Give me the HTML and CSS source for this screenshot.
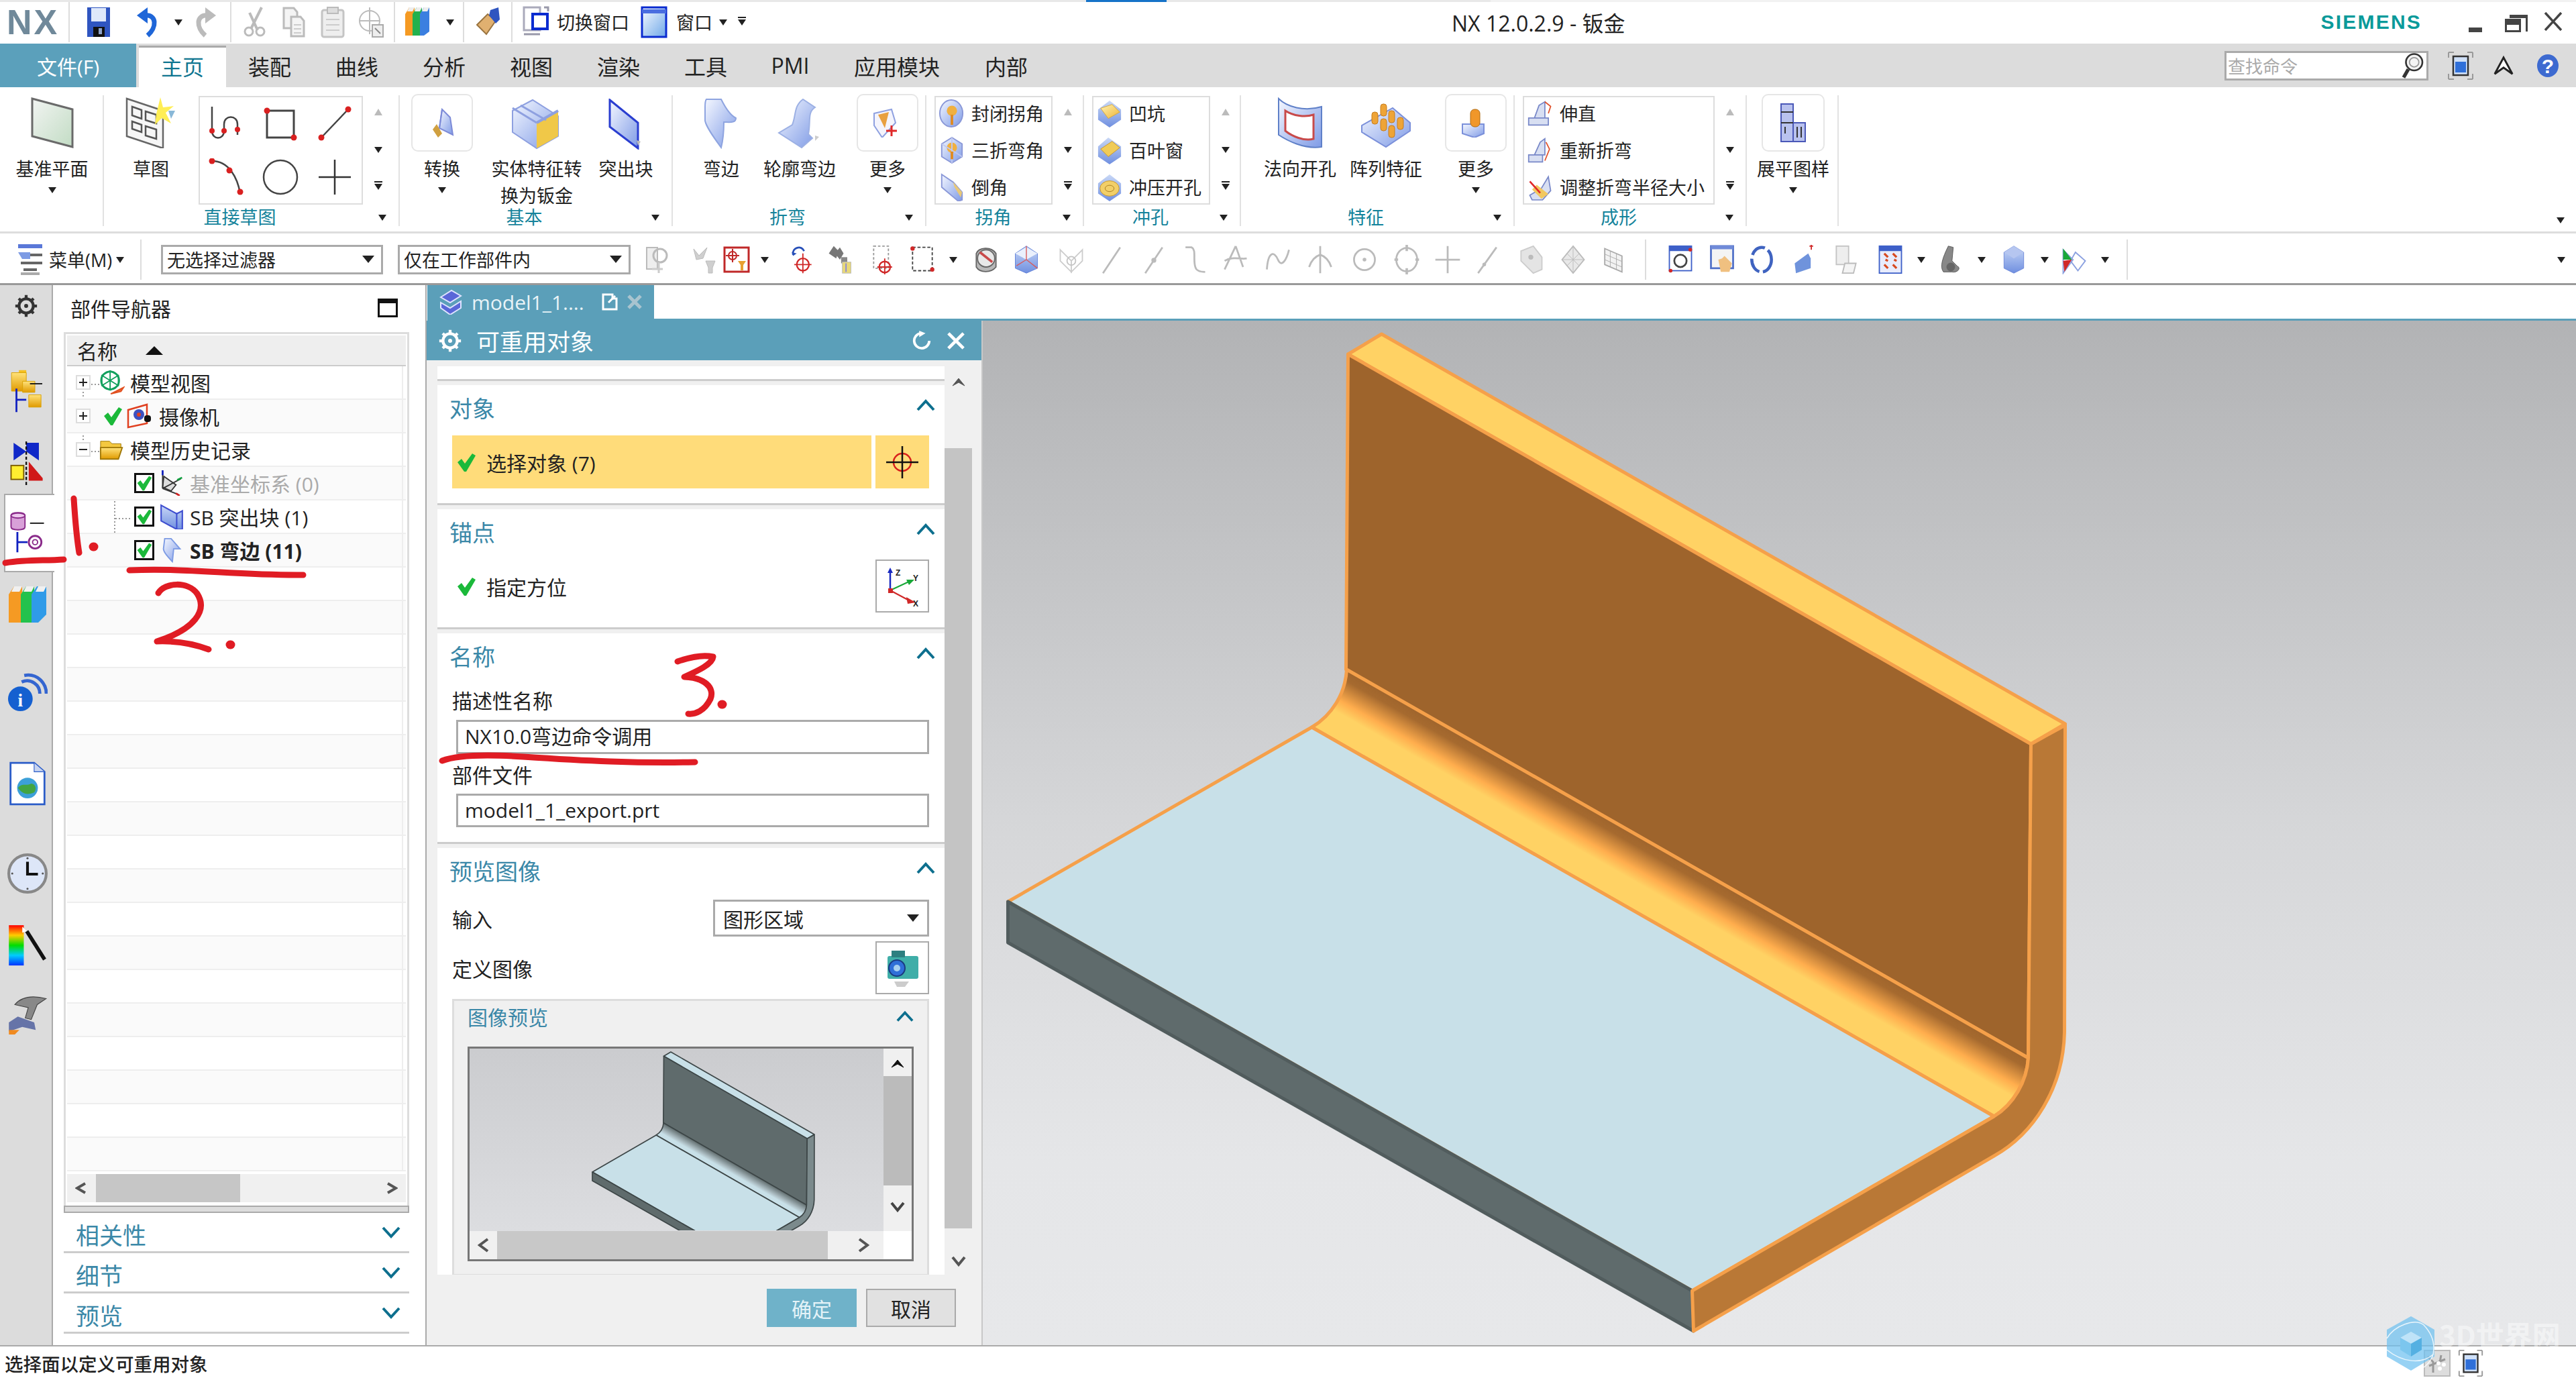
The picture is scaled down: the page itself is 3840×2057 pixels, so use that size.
FILE: index.html
```html
<!DOCTYPE html>
<html lang="zh-CN">
<head>
<meta charset="utf-8">
<title>NX 12.0.2.9 - 钣金</title>
<link rel="stylesheet" href="styles.css">
</head>
<body>
<svg class="sprite" aria-hidden="true">
<defs>
<linearGradient id="gB" x1="0" y1="0" x2="1" y2="1"><stop offset="0" stop-color="#f4f7ff"/><stop offset="1" stop-color="#7f9be6"/></linearGradient>
<linearGradient id="gB2" x1="0" y1="0" x2="0" y2="1"><stop offset="0" stop-color="#c9d8f6"/><stop offset="1" stop-color="#6f8fe0"/></linearGradient>
<linearGradient id="gY" x1="0" y1="0" x2="1" y2="1"><stop offset="0" stop-color="#fff2b0"/><stop offset="1" stop-color="#eeb53a"/></linearGradient>
<linearGradient id="gG" x1="0" y1="0" x2="1" y2="1"><stop offset="0" stop-color="#f2f4f2"/><stop offset="1" stop-color="#c2dcc4"/></linearGradient>
<linearGradient id="gF" x1="0" y1="0" x2="0" y2="1"><stop offset="0" stop-color="#ffe27a"/><stop offset="1" stop-color="#e09a00"/></linearGradient>
<linearGradient id="gR" x1="0" y1="0" x2="0" y2="1"><stop offset="0" stop-color="#f00"/><stop offset=".25" stop-color="#fc0"/><stop offset=".5" stop-color="#0d0"/><stop offset=".75" stop-color="#0cf"/><stop offset="1" stop-color="#03f"/></linearGradient>
<linearGradient id="bendA" gradientUnits="userSpaceOnUse" x1="2008" y1="998" x2="1958.5" y2="1085"><stop offset="0" stop-color="#9e642c"/><stop offset=".15" stop-color="#a66a2f"/><stop offset=".45" stop-color="#ffad4d"/><stop offset=".62" stop-color="#ffd264"/><stop offset="1" stop-color="#ffd264"/></linearGradient>
<linearGradient id="bendB" gradientUnits="userSpaceOnUse" x1="2008" y1="998" x2="1958.5" y2="1085"><stop offset="0" stop-color="#5f6b6c"/><stop offset=".5" stop-color="#aebfc5"/><stop offset=".7" stop-color="#c8e0e8"/><stop offset="1" stop-color="#c8e0e8"/></linearGradient>
<g id="model">
<polygon class="m-top" points="2060,498 3079,1079 3028,1109 2010,528"/>
<polygon class="m-web" points="2010,528 3028,1109 3024,1577 2007,998"/>
<path class="m-bend" d="M2008 998 3024 1577C3022 1612 3002 1646 2973 1664L1956 1084C1986 1066 2006 1034 2008 998Z"/>
<polygon class="m-plate" points="1956,1084 2973,1664 2523,1924 1503,1344"/>
<polygon class="m-front" points="1503,1344 2523,1924 2525,1984 1503,1405"/>
<path class="m-side" d="M3028 1109 3079 1081 3078 1539C3076 1622 3032 1690 2973 1723L2525 1984 2523 1924 2973 1664C3002 1646 3022 1612 3024 1577Z"/>
</g>
<symbol id="save" viewBox="0 0 40 48"><path d="M3 2h34v44H3z" fill="#2f55c0"/><path d="M9 3h22v20H9z" fill="#dfe8fa"/><path d="M12 31h17v15H12z" fill="#111"/><path d="M20 33h5v9h-5z" fill="#8fa3c8"/></symbol>
<symbol id="undo" viewBox="0 0 40 48"><path d="M20 44C34 32 34 12 16 14" fill="none" stroke="#1f66d8" stroke-width="7"/><path d="M4 14 20 2v24z" fill="#1f66d8"/></symbol>
<symbol id="redo" viewBox="0 0 40 48"><path d="M20 44C6 32 6 12 24 14" fill="none" stroke="#bbb" stroke-width="7"/><path d="M36 14 20 2v24z" fill="#bbb"/></symbol>
<symbol id="cut" viewBox="0 0 40 48"><path d="M30 2 14 34M12 10l12 26" fill="none" stroke="#bbb" stroke-width="4"/><circle cx="11" cy="38" r="6" fill="none" stroke="#bbb" stroke-width="3"/><circle cx="28" cy="38" r="6" fill="none" stroke="#bbb" stroke-width="3"/></symbol>
<symbol id="copy" viewBox="0 0 40 48"><path d="M5 3h15l5 6v24H5z" fill="#f4f4f4" stroke="#bbb" stroke-width="3"/><path d="M16 16h14l5 6v23H16z" fill="#f4f4f4" stroke="#bbb" stroke-width="3"/><path d="M20 28h11M20 34h11M20 40h11" stroke="#ccc" stroke-width="2"/></symbol>
<symbol id="paste" viewBox="0 0 40 48"><rect x="4" y="6" width="32" height="40" rx="3" fill="#eee" stroke="#c4c4c4" stroke-width="3"/><rect x="12" y="2" width="16" height="9" fill="#ddd" stroke="#bbb" stroke-width="2"/><path d="M10 20h20M10 28h20M10 36h20" stroke="#ccc" stroke-width="2"/></symbol>
<symbol id="pastes" viewBox="0 0 40 48"><circle cx="18" cy="22" r="15" fill="none" stroke="#bbb" stroke-width="2"/><path d="M18 2v40M2 22h32" stroke="#bbb" stroke-width="2"/><rect x="22" y="28" width="16" height="18" fill="#eee" stroke="#aaa" stroke-width="2"/><path d="m26 33 8 8" stroke="#888" stroke-width="2"/></symbol>
<symbol id="books" viewBox="0 0 40 48"><path d="M2 12 8 2h8v42H2z" fill="#f59a23"/><path d="M13 12l6-10h8v42H13z" fill="#23b14d"/><path d="M24 12l6-10h8v36l-8 6h-6z" fill="#3b7fe0"/><path d="M8 2h8l-3 6H5zM19 2h8l-3 6h-8zM30 2h8l-3 6h-8z" fill="#eee"/></symbol>
<symbol id="hand" viewBox="0 0 40 48"><path d="M4 28 20 12l12 10-14 20z" fill="#e0b070" stroke="#9a7440" stroke-width="2"/><path d="M24 6l12-4 2 18-6 6-10-12z" fill="#2f55c0"/></symbol>
<symbol id="switch" viewBox="0 0 40 48"><rect x="2" y="2" width="24" height="34" fill="#fff" stroke="#aab" stroke-width="3"/><rect x="15" y="12" width="22" height="22" fill="#fff" stroke="#0a2bd0" stroke-width="4"/><path d="M2 42h24M32 2h6v6" stroke="#99a" stroke-width="3" fill="none"/></symbol>
<symbol id="win" viewBox="0 0 40 48"><defs><linearGradient id="gW" x1="0" y1="0" x2="1" y2="1"><stop offset="0" stop-color="#f8fbff"/><stop offset="1" stop-color="#6fa8e8"/></linearGradient></defs><rect x="2" y="2" width="36" height="44" fill="url(#gW)" stroke="#0a2bd0" stroke-width="3"/><path d="M2 8h36" stroke="#4a6ee0" stroke-width="6"/></symbol>
<symbol id="datum" viewBox="0 0 64 76"><path d="M2 2 62 18V74L2 58z" fill="url(#gG)" stroke="#6a6a6a" stroke-width="3"/></symbol>
<symbol id="sketch" viewBox="0 0 76 76"><path d="M2 2 56 20V76L2 58z" fill="#f6f6f6" stroke="#666" stroke-width="2.5"/><path d="M10 14 24 19V32L10 27zM30 21 46 26V39L30 34zM10 36 24 41V52L10 47zM30 43 46 48V62L30 57z" fill="none" stroke="#555" stroke-width="2.5"/><path d="M52 0l4 15 16-2-12 10 8 16-14-8-10 10 2-16z" fill="#ffee55"/><path d="M64 20h10l-6 12z" fill="#89b8d8"/></symbol>
<symbol id="sspline" viewBox="0 0 56 56"><path d="M6 2V38C6 52 24 52 24 38V28C24 14 44 14 44 28V44" fill="none" stroke="#444" stroke-width="2.5"/><circle cx="6" cy="38" r="4" fill="#d92020"/><circle cx="24" cy="38" r="4" fill="#d92020"/><circle cx="44" cy="36" r="4" fill="#d92020"/></symbol>
<symbol id="srect" viewBox="0 0 56 56"><rect x="8" y="8" width="40" height="40" fill="none" stroke="#444" stroke-width="3"/><circle cx="8" cy="8" r="4.5" fill="#d92020"/><circle cx="48" cy="48" r="4.5" fill="#d92020"/></symbol>
<symbol id="sline" viewBox="0 0 56 56"><path d="M8 48 48 6" stroke="#444" stroke-width="2.5"/><circle cx="8" cy="48" r="4.5" fill="#d92020"/><circle cx="48" cy="6" r="4.5" fill="#d92020"/></symbol>
<symbol id="sarc" viewBox="0 0 56 56"><path d="M6 4C32 4 44 30 48 52" fill="none" stroke="#444" stroke-width="2.5"/><circle cx="6" cy="4" r="4.5" fill="#d92020"/><circle cx="32" cy="18" r="4.5" fill="#d92020"/><circle cx="48" cy="50" r="4.5" fill="#d92020"/></symbol>
<symbol id="scircle" viewBox="0 0 56 56"><ellipse cx="28" cy="28" rx="25" ry="25" fill="none" stroke="#444" stroke-width="2.5"/></symbol>
<symbol id="spoint" viewBox="0 0 56 56"><path d="M28 2V54M4 28H52" stroke="#333" stroke-width="2.5"/></symbol>
<symbol id="convert" viewBox="0 0 44 44"><path d="M22 2 34 14 38 40 18 30z" fill="url(#gB)" stroke="#7d8bd8" stroke-width="2"/><path d="M8 32 14 24 22 38 16 44z" fill="#d0a040"/><path d="M22 2 18 30" stroke="#7d8bd8" stroke-width="2"/></symbol>
<symbol id="s2s" viewBox="0 0 76 76"><path d="M2 18 32 2 70 26V56L38 74 2 50z" fill="url(#gB)" stroke="#8ea0e0" stroke-width="2"/><path d="M38 74V36L70 18V56z" fill="#f0c848"/><path d="M38 36 2 14M14 10 52 32" stroke="#8ea0e0" stroke-width="3" fill="none"/><path d="M38 36 70 18" stroke="#8ea0e0" stroke-width="4"/></symbol>
<symbol id="tabb" viewBox="0 0 56 76"><path d="M4 2 46 36V74L4 42z" fill="url(#gB)" stroke="#2a3ed0" stroke-width="3"/><path d="M44 62l6 2-4 6z" fill="#bbb"/></symbol>
<symbol id="flange" viewBox="0 0 56 76"><path d="M6 2H28C34 14 42 26 50 30 50 38 40 36 32 36 32 50 30 66 28 74 18 60 6 44 4 34V14C4 8 4 4 6 2Z" fill="url(#gB)" stroke="#8ea4e0" stroke-width="2"/></symbol>
<symbol id="contour" viewBox="0 0 70 76"><path d="M40 2 58 14C46 22 52 34 48 54L54 60 38 74 4 52 24 40C30 26 26 12 40 2Z" fill="url(#gB)" stroke="#9cb0e4" stroke-width="2"/><path d="M58 56l6 2-6 6z" fill="#ccc"/></symbol>
<symbol id="more1" viewBox="0 0 44 44"><path d="M2 8 28 2 34 22 14 44 2 26z" fill="#f4f4fc" stroke="#8ea0e0" stroke-width="2"/><path d="M8 10 24 6 18 30z" fill="#e8a040"/><path d="M28 26V42M20 34H36" stroke="#e02828" stroke-width="3"/></symbol>
<symbol id="ccorner" viewBox="0 0 40 44"><ellipse cx="19" cy="22" rx="18" ry="21" fill="url(#gB)" stroke="#8a98d8" stroke-width="2"/><circle cx="20" cy="18" r="8" fill="#f0b040"/><path d="M20 24v16" stroke="#e08a20" stroke-width="4"/></symbol>
<symbol id="tribend" viewBox="0 0 40 44"><path d="M20 2 36 12V32L20 42 4 32V12Z" fill="url(#gB)" stroke="#8a98d8" stroke-width="2"/><circle cx="20" cy="18" r="8" fill="#f0b040"/><path d="M20 2V42M4 12 36 32" stroke="#c0c8f0" stroke-width="2"/><path d="M20 24v12" stroke="#e08a20" stroke-width="4"/></symbol>
<symbol id="chamf" viewBox="0 0 40 44"><path d="M4 2 22 14 36 30V42L30 44 4 22z" fill="url(#gB)" stroke="#8a98d8" stroke-width="2"/><path d="M22 14 36 30 34 38 24 22z" fill="#e8c878"/></symbol>
<symbol id="dimple" viewBox="0 0 40 44"><path d="M20 2 38 16V32L20 44 2 32V16Z" fill="url(#gB2)"/><path d="M6 14 24 8 36 20 18 30z" fill="url(#gY)" stroke="#d8a838"/></symbol>
<symbol id="louver" viewBox="0 0 40 44"><path d="M18 2 38 16V32L20 44 2 32V16Z" fill="url(#gB2)"/><path d="M6 20 24 8 36 18 18 32z" fill="#f0cb58" stroke="#c9982a"/></symbol>
<symbol id="drawn" viewBox="0 0 40 44"><path d="M20 2 38 16V32L20 44 2 32V16Z" fill="url(#gB2)"/><ellipse cx="20" cy="24" rx="15" ry="12" fill="#f2cf68" stroke="#c9982a"/><ellipse cx="20" cy="24" rx="7" ry="5" fill="none" stroke="#a87c20"/></symbol>
<symbol id="ncut" viewBox="0 0 68 76"><path d="M2 2C14 14 40 22 66 14V74C40 78 14 64 2 56z" fill="url(#gB)" stroke="#5f80c8" stroke-width="2"/><path d="M12 20C24 28 42 30 54 26V62C40 66 22 58 12 50z" fill="#fff" stroke="#c84a4a" stroke-width="3"/></symbol>
<symbol id="pattern" viewBox="0 0 76 68"><path d="M2 34 48 8 74 30V42L38 66 2 44z" fill="url(#gB)" stroke="#7b90da" stroke-width="2"/><g fill="#eea437" stroke="#c77c1c" stroke-width="1"><rect x="30" y="2" width="9" height="18" rx="4"/><rect x="17" y="14" width="9" height="18" rx="4"/><rect x="42" y="12" width="9" height="18" rx="4"/><rect x="30" y="24" width="9" height="18" rx="4"/><rect x="55" y="22" width="9" height="18" rx="4"/><rect x="42" y="34" width="9" height="18" rx="4"/></g></symbol>
<symbol id="more2" viewBox="0 0 44 44"><path d="M2 24 34 24V38L20 44 2 38z" fill="url(#gB)" stroke="#7b90da" stroke-width="2"/><rect x="14" y="2" width="14" height="26" rx="6" fill="#f0972a" stroke="#b06a10"/></symbol>
<symbol id="unbend" viewBox="0 0 44 44"><path d="M2 30H36V42H2zM20 8 30 2V30H12z" fill="#d8dff2" stroke="#7787c8" stroke-width="2"/><path d="M30 2 40 10 36 22" fill="none" stroke="#e0502a" stroke-width="2"/></symbol>
<symbol id="rebend" viewBox="0 0 44 44"><path d="M2 30H26V42H2zM22 8 30 2V30H12z" fill="#d8dff2" stroke="#7787c8" stroke-width="2"/><path d="M32 8 38 20 30 40" fill="none" stroke="#e0502a" stroke-width="2"/></symbol>
<symbol id="resize" viewBox="0 0 44 44"><path d="M4 36 24 24 36 4 40 28 26 44H8z" fill="#d8dff2" stroke="#7787c8" stroke-width="2"/><path d="M16 18 36 34 24 42 8 26z" fill="#f2c860"/><path d="M4 12 22 32" stroke="#e02828" stroke-width="3"/></symbol>
<symbol id="flat" viewBox="0 0 40 60"><path d="M2 2H20V58H2zM20 30H38V58H20z" fill="#b9c2ee" stroke="#4a58b8" stroke-width="2"/><path d="M2 14H20M2 30H20M8 36v10M26 36v16M32 36v16" stroke="#333" stroke-width="2"/></symbol>
<symbol id="menuic" viewBox="0 0 40 50"><path d="M2 2H38V8H2z" fill="#5a78d8"/><path d="M10 18H38M6 30H38M10 40H30" stroke="#666" stroke-width="4"/><path d="M2 14H20V24H8z" fill="#7d9be4"/><path d="M6 44H34V48H6z" fill="#aaa"/></symbol>
<symbol id="f1" viewBox="0 0 40 40"><rect x="4" y="2" width="16" height="32" fill="#eee" stroke="#bbb" stroke-width="2"/><circle cx="24" cy="14" r="10" fill="none" stroke="#bbb" stroke-width="3"/><path d="M22 24v16M12 34h16" stroke="#ccc" stroke-width="3"/></symbol>
<symbol id="f2" viewBox="0 0 40 40"><path d="M4 4 12 14 24 2 18 18 8 20zM22 22h14l-4 10v8h-6v-8z" fill="#cfcfcf" stroke="#bbb"/></symbol>
<symbol id="f3" viewBox="0 0 40 40"><rect x="2" y="2" width="36" height="36" fill="#fff" stroke="#c02828" stroke-width="3"/><circle cx="14" cy="14" r="6" fill="none" stroke="#c02828" stroke-width="2"/><path d="M14 4v20M4 14h20" stroke="#c02828" stroke-width="2"/><path d="M22 22h12l-4 6v8h-4v-8z" fill="#e8a030"/></symbol>
<symbol id="f4" viewBox="0 0 40 48"><path d="M6 16C4 4 20 0 24 10" fill="none" stroke="#274fb8" stroke-width="3"/><circle cx="22" cy="32" r="10" fill="none" stroke="#d02828" stroke-width="2.5"/><path d="M22 14V46M8 32H36" stroke="#d02828" stroke-width="2"/><path d="M6 18l-2-6 8 2z" fill="#274fb8"/></symbol>
<symbol id="f5" viewBox="0 0 40 48"><path d="M2 14 10 2 18 10l-4 12zM12 14l8-10 6 10-6 10z" fill="#777"/><rect x="22" y="20" width="10" height="10" fill="#888"/><rect x="24" y="28" width="14" height="18" fill="#e8d878" stroke="#bbb"/><path d="M30 30v14" stroke="#8888d8" stroke-width="2"/></symbol>
<symbol id="f6" viewBox="0 0 40 48"><rect x="4" y="2" width="24" height="36" fill="none" stroke="#999" stroke-width="2" stroke-dasharray="4 3"/><circle cx="22" cy="36" r="9" fill="none" stroke="#d02828" stroke-width="2.5"/><path d="M22 22V48M10 36H34" stroke="#d02828" stroke-width="2"/></symbol>
<symbol id="f7" viewBox="0 0 40 48"><rect x="4" y="4" width="32" height="38" fill="none" stroke="#444" stroke-width="2" stroke-dasharray="5 3"/><circle cx="4" cy="6" r="3.5" fill="#d02828"/><circle cx="36" cy="40" r="3.5" fill="#d02828"/></symbol>
<symbol id="f8" viewBox="0 0 40 48"><path d="M4 14C8 4 28 2 36 14V36C28 46 10 46 4 36z" fill="#b8b8b8" stroke="#666" stroke-width="2"/><ellipse cx="20" cy="22" rx="14" ry="14" fill="#e8e8e8" stroke="#666" stroke-width="2"/><path d="M10 12 30 28" stroke="#c84a4a" stroke-width="4"/></symbol>
<symbol id="f9" viewBox="0 0 40 48"><path d="M20 2 38 14V38L20 46 2 38V14Z" fill="url(#gB2)" stroke="#5f80d8" stroke-width="1"/><path d="M2 14 20 24 38 14 20 4z" fill="#eaf0fc"/><path d="M20 2V24L38 38M20 24 4 34" stroke="#d85a5a" stroke-width="1.5" fill="none"/></symbol>
<symbol id="f10" viewBox="0 0 40 48"><path d="M2 8 20 26V44L2 26zM38 8 20 26V44L38 26z" fill="none" stroke="#ccc" stroke-width="2"/><circle cx="20" cy="26" r="7" fill="none" stroke="#c4c4c4" stroke-width="2"/></symbol>
<symbol id="f11" viewBox="0 0 40 48"><path d="M6 46 34 4" stroke="#bbb" stroke-width="3"/></symbol>
<symbol id="f12" viewBox="0 0 40 48"><path d="M6 46 34 4" stroke="#bbb" stroke-width="3"/><circle cx="20" cy="25" r="4" fill="#bbb"/></symbol>
<symbol id="f13" viewBox="0 0 40 48"><path d="M6 4H16C24 8 18 24 22 36 24 44 34 44 38 44" fill="none" stroke="#bbb" stroke-width="3"/></symbol>
<symbol id="f14" viewBox="0 0 40 48"><path d="M20 2 2 40M20 2 32 36M2 26C14 18 28 24 38 22" fill="none" stroke="#bbb" stroke-width="3"/></symbol>
<symbol id="f15" viewBox="0 0 40 48"><path d="M2 40C4 10 14 10 20 24 26 38 34 24 38 8" fill="none" stroke="#bbb" stroke-width="3"/></symbol>
<symbol id="f16" viewBox="0 0 40 48"><path d="M20 2V46M2 36C6 24 14 18 20 16 26 18 34 24 38 36" fill="none" stroke="#bbb" stroke-width="3"/></symbol>
<symbol id="f17" viewBox="0 0 40 48"><circle cx="20" cy="24" r="17" fill="none" stroke="#bbb" stroke-width="3"/><circle cx="20" cy="24" r="3" fill="#bbb"/></symbol>
<symbol id="f18" viewBox="0 0 40 48"><ellipse cx="20" cy="24" rx="17" ry="19" fill="none" stroke="#bbb" stroke-width="3"/><path d="M20 0V10M20 38V48M0 24H6M34 24H40" stroke="#bbb" stroke-width="4"/></symbol>
<symbol id="f19" viewBox="0 0 40 48"><path d="M20 2V46M0 24H40" stroke="#bbb" stroke-width="3"/></symbol>
<symbol id="f20" viewBox="0 0 40 48"><path d="M4 46 34 4" stroke="#bbb" stroke-width="3"/><circle cx="14" cy="32" r="3" fill="#bbb"/></symbol>
<symbol id="f21" viewBox="0 0 40 48"><path d="M4 10 24 2 38 20V40L24 46 4 26z" fill="#e4e4e4" stroke="#ccc" stroke-width="2"/><circle cx="20" cy="20" r="4" fill="#bbb"/></symbol>
<symbol id="f22" viewBox="0 0 40 48"><path d="M20 2 38 24 20 46 2 24z" fill="#e8e8e8" stroke="#bbb" stroke-width="2"/><path d="M10 14 30 34M30 14 10 34M20 2V46M2 24H38" stroke="#bbb"/></symbol>
<symbol id="f23" viewBox="0 0 40 48"><path d="M6 6 34 18V44L6 32z" fill="#f2f2f2" stroke="#aaa" stroke-width="2"/><path d="M15 10V36M25 14V40M6 15 34 27M6 24 34 36" stroke="#aaa"/></symbol>
<symbol id="f24" viewBox="0 0 40 48"><rect x="2" y="2" width="36" height="40" fill="#fff" stroke="#3d5fc8" stroke-width="2"/><path d="M2 6H38" stroke="#3d5fc8" stroke-width="8"/><circle cx="20" cy="26" r="10" fill="none" stroke="#444" stroke-width="3"/><circle cx="4" cy="42" r="3" fill="#d02828"/><circle cx="36" cy="8" r="3" fill="#d02828"/></symbol>
<symbol id="f25" viewBox="0 0 40 48"><rect x="2" y="2" width="36" height="36" fill="#f4f4f4" stroke="#5070c8" stroke-width="3"/><path d="M2 4H38" stroke="#6f8ad8" stroke-width="6"/><path d="M18 44 14 24 20 22 24 18 36 30 32 44z" fill="#f0c080"/></symbol>
<symbol id="f26" viewBox="0 0 40 48"><ellipse cx="20" cy="24" rx="16" ry="20" fill="none" stroke="#3f63c0" stroke-width="5" stroke-dasharray="26 6"/></symbol>
<symbol id="f27" viewBox="0 0 40 48"><path d="M4 30 26 14 30 22V38L6 46z" fill="#6f93dc"/><path d="M28 2h6M31 0v8" stroke="#d02828" stroke-width="2"/></symbol>
<symbol id="f28" viewBox="0 0 40 48"><rect x="4" y="2" width="20" height="30" fill="#eee" stroke="#c4c4c4" stroke-width="2"/><path d="M18 30H36L32 46H14z" fill="#f4f4f4" stroke="#bbb" stroke-width="2"/></symbol>
<symbol id="f29" viewBox="0 0 40 48"><rect x="2" y="2" width="36" height="44" fill="#e8ecfc" stroke="#3d5fc8" stroke-width="2"/><path d="M2 6H38" stroke="#3d5fc8" stroke-width="8"/><path d="M10 14l6 6M24 14l6 6M10 32l6 6M24 32l6 6M12 24l4 2M26 24l4 2" stroke="#d84a20" stroke-width="3.5"/></symbol>
<symbol id="f30" viewBox="0 0 40 48"><path d="M16 2 24 4 22 26 30 34C38 38 30 46 22 44L8 44C2 36 6 22 16 2Z" fill="#888" stroke="#555"/><circle cx="20" cy="36" r="7" fill="#666"/></symbol>
<symbol id="f31" viewBox="0 0 40 48"><path d="M20 2 36 12V38L20 46 4 38V12Z" fill="url(#gB2)" stroke="#6a86d8"/><path d="M4 12 20 22 36 12 20 2z" fill="#b6c6f0"/></symbol>
<symbol id="f32" viewBox="0 0 40 48"><path d="M2 8 18 24 2 46zM22 12 38 26 26 42 14 26z" fill="none" stroke="#8aa0e0" stroke-width="2"/><path d="M2 6 16 24 2 24z" fill="#18a838"/><path d="M2 26 16 24 4 44z" fill="#d02828"/></symbol>
<symbol id="gear" viewBox="0 0 40 40"><circle cx="20" cy="20" r="12.5" fill="none" stroke="currentColor" stroke-width="5"/><circle cx="20" cy="20" r="3.5" fill="currentColor"/><path d="M20 1V7M20 33V39M1 20H7M33 20H39M7 7l4 4M29 29l4 4M33 7l-4 4M7 33l4-4" stroke="currentColor" stroke-width="5"/></symbol>
<symbol id="nav1" viewBox="0 0 56 72"><path d="M14 2h12v10h-12zM2 12h12v12H2z" fill="#f4c020"/><path d="M2 6h24v18h-2v12H2z" fill="url(#gF)" stroke="#d8a000"/><path d="M20 20h20v18H20z" fill="url(#gF)" stroke="#d8a000"/><path d="M32 28h20" stroke="#111" stroke-width="2" transform="translate(0 -4)"/><path d="M10 32V70M10 50H26" stroke="#1020c0" stroke-width="3"/><path d="M30 42h20v20H30z" fill="url(#gF)" stroke="#d8a000"/></symbol>
<symbol id="nav2" viewBox="0 0 56 70"><path d="M6 2 26 16V2L46 2V30L26 16 6 30z" fill="#1028c8"/><path d="M26 0V70" stroke="#111" stroke-width="2.5" stroke-dasharray="5 3"/><rect x="2" y="38" width="20" height="22" fill="#ffee30" stroke="#7a5a00" stroke-width="2"/><path d="M30 32 52 58V62H30z" fill="#d01818"/></symbol>
<symbol id="nav3" viewBox="0 0 56 70"><path d="M2 8C2 2 24 2 24 8V26C24 32 2 32 2 26z" fill="#d8a0d8" stroke="#8a2a8a" stroke-width="2"/><ellipse cx="13" cy="8" rx="11" ry="4" fill="#eec8ee" stroke="#8a2a8a" stroke-width="2"/><path d="M32 20H54" stroke="#111" stroke-width="2"/><path d="M12 34V66M12 50H28" stroke="#1020c0" stroke-width="3"/><circle cx="40" cy="50" r="10" fill="none" stroke="#8a2a8a" stroke-width="3"/><circle cx="40" cy="50" r="4" fill="none" stroke="#8a2a8a" stroke-width="2"/></symbol>
<symbol id="nav4" viewBox="0 0 60 56"><path d="M2 14 10 2H22V56H2z" fill="#f59a23"/><path d="M20 14l8-12h12V56H20z" fill="#23c24d"/><path d="M36 14 44 2H58V44L46 56H36z" fill="#2f9be8"/><path d="M10 2h12l-4 8H6zM28 2h12l-4 8H24zM46 2h12l-4 8H42z" fill="#f0f0f0"/></symbol>
<symbol id="nav5" viewBox="0 0 62 60"><ellipse cx="20" cy="40" rx="19" ry="19" fill="#1560d0"/><text class="info" x="20" y="52" text-anchor="middle">i</text><path d="M22 14C36 8 50 18 50 32M26 4C46 0 60 16 60 32" fill="none" stroke="#3465d0" stroke-width="5"/></symbol>
<symbol id="nav6" viewBox="0 0 50 60"><path d="M2 2H34L48 14V58H2z" fill="#fff" stroke="#2a5cc8" stroke-width="2.5"/><ellipse cx="25" cy="36" rx="14" ry="14" fill="#3ca0d8"/><path d="M12 36C18 28 22 34 30 30 36 30 38 38 34 42 24 46 18 44 12 36Z" fill="#42a542"/><path d="M34 2V14H48" fill="#c8d4f0" stroke="#2a5cc8"/></symbol>
<symbol id="nav7" viewBox="0 0 58 58"><circle cx="29" cy="29" r="27" fill="#dde6f8" stroke="#888" stroke-width="4"/><path d="M29 12V30H44" fill="none" stroke="#111" stroke-width="4"/><g fill="#555"><circle cx="29" cy="7" r="1.5"/><circle cx="29" cy="51" r="1.5"/><circle cx="7" cy="29" r="1.5"/><circle cx="51" cy="29" r="1.5"/></g></symbol>
<symbol id="nav8" viewBox="0 0 54 56"><rect x="2" y="2" width="20" height="54" fill="url(#gR)"/><path d="M26 10 50 48" stroke="#111" stroke-width="5"/><path d="M20 4l6 6-6 2z" fill="#fff"/></symbol>
<symbol id="nav9" viewBox="0 0 54 56"><path d="M10 14C20 2 36 2 52 6L40 14 32 34 24 32 28 18Z" fill="#888" stroke="#444"/><path d="M2 38 14 30 36 38 38 48 20 44 2 50z" fill="#6674a8"/><path d="M2 48h14l-6 6H2z" fill="#f08a20"/></symbol>
<symbol id="plus" viewBox="0 0 22 22"><rect x="1" y="1" width="20" height="20" fill="#fff" stroke="#ddd" stroke-width="2"/><path d="M5 11h12M11 5v12" stroke="#222" stroke-width="2"/></symbol>
<symbol id="minus" viewBox="0 0 22 22"><rect x="1" y="1" width="20" height="20" fill="#fff" stroke="#ddd" stroke-width="2"/><path d="M5 11h12" stroke="#222" stroke-width="2"/></symbol>
<symbol id="tview" viewBox="0 0 40 40"><circle cx="17" cy="17" r="14" fill="none" stroke="#12a05e" stroke-width="3"/><path d="M4 9 17 2 30 9V25L17 32 4 25ZM17 2V32M4 9 30 25M30 9 4 25" fill="none" stroke="#12a05e" stroke-width="2"/><path d="M18 38 38 28 34 34z" fill="#f06a3a" stroke="#e05020" stroke-width="2"/></symbol>
<symbol id="tcheck" viewBox="0 0 30 30"><path d="M2 15 8 10 13 17 24 2 29 5 15 29 12 29z" fill="#1bb93a"/></symbol>
<symbol id="tcam" viewBox="0 0 38 38"><path d="M2 10 30 2V30L2 36z" fill="none" stroke="#e04020" stroke-width="2.5"/><circle cx="18" cy="17" r="8" fill="#3d50c0"/><circle cx="18" cy="17" r="3" fill="#e04020"/><rect x="26" y="18" width="10" height="10" rx="4" fill="#111"/></symbol>
<symbol id="tfolder" viewBox="0 0 40 34"><path d="M2 4H16L20 8H34V14H2z" fill="#f4c840" stroke="#a07808"/><path d="M2 32V14H36L30 32z" fill="url(#gF)" stroke="#a07808" stroke-width="2"/></symbol>
<symbol id="tcsys" viewBox="0 0 38 42"><path d="M6 10 26 24 18 34 4 28z" fill="#ddd" stroke="#333" stroke-width="2"/><path d="M4 2V30M4 30 34 14M4 30 30 40" stroke="#333" stroke-width="2"/><path d="M4 0V8" stroke="#1020c0" stroke-width="3"/><path d="M28 16 36 12" stroke="#12a040" stroke-width="3"/><path d="M26 38 32 42" stroke="#d02020" stroke-width="3"/></symbol>
<symbol id="ttab" viewBox="0 0 34 36"><path d="M2 2 24 14 32 10V36H24L2 24z" fill="url(#gB2)" stroke="#3f4fd0" stroke-width="2"/><path d="M24 14V36" stroke="#3f4fd0" stroke-width="2"/></symbol>
<symbol id="tfl" viewBox="0 0 30 40"><path d="M4 2H14L28 18 18 18 16 38C10 32 2 24 2 18Z" fill="url(#gB)" stroke="#7d9be4" stroke-width="2"/></symbol>
<symbol id="cross" viewBox="0 0 48 48"><circle cx="24" cy="24" r="13" fill="none" stroke="#d8201c" stroke-width="2.5"/><path d="M24 0V48M0 24H48" stroke="#111" stroke-width="2.5"/></symbol>
<symbol id="csys" viewBox="0 0 56 60"><path d="M10 36V6" stroke="#1828c0" stroke-width="2.5"/><path d="M10 2 14 10H6z" fill="#1828c0"/><path d="M10 36 40 22" stroke="#18a838" stroke-width="2"/><path d="M34 20 46 20 38 28z" fill="#18a838"/><path d="M10 36 40 52" stroke="#d02828" stroke-width="2"/><path d="M34 46 48 54 36 56z" fill="#d02828"/><rect x="7" y="33" width="7" height="7" fill="#d02828"/><text class="axis" x="18" y="14">Z</text><text class="axis" x="44" y="22">Y</text><text class="axis" x="44" y="60">X</text></symbol>
<symbol id="camera" viewBox="0 0 52 60"><rect x="4" y="12" width="46" height="34" rx="3" fill="#3faea8"/><rect x="10" y="4" width="20" height="10" fill="#2d7f80"/><circle cx="18" cy="30" r="12" fill="#2f6fd8" stroke="#1a3a80" stroke-width="2"/><circle cx="18" cy="30" r="5" fill="#a8d0f0"/><path d="M14 50H36L30 58H18z" fill="#ccc"/></symbol>
<symbol id="find" viewBox="0 0 40 48"><circle cx="22" cy="18" r="14" fill="#f4f4f4" stroke="#333" stroke-width="3"/><circle cx="22" cy="18" r="8" fill="none" stroke="#999" stroke-width="2"/><path d="M12 30 4 44" stroke="#333" stroke-width="6"/></symbol>
<symbol id="ribmin" viewBox="0 0 40 44"><path d="M2 2H10M2 2V10M30 2H38M38 2V10M2 42H10M2 42V34M30 42H38M38 42V34" stroke="#999" stroke-width="2" fill="none"/><rect x="9" y="8" width="22" height="28" fill="#cfe0f8" stroke="#333" stroke-width="2.5"/><rect x="12" y="16" width="16" height="16" fill="#2f6fd8"/></symbol>
<symbol id="help" viewBox="0 0 34 36"><ellipse cx="17" cy="18" rx="16" ry="17" fill="#3d6ad0"/><text class="qm" x="17" y="29" text-anchor="middle">?</text></symbol>
</defs>
</svg>

<div class="app">
  <header class="titlebar">
    <div class="loadbar"><i class="loadbar-on"></i></div>
    <div class="nxlogo">NX</div>
    <div class="qat">
      <i class="sep"></i>
      <svg class="ic"><use href="#save"/></svg>
      <svg class="ic"><use href="#undo"/></svg>
      <i class="ar"></i>
      <svg class="ic"><use href="#redo"/></svg>
      <i class="sep"></i>
      <svg class="ic"><use href="#cut"/></svg>
      <svg class="ic"><use href="#copy"/></svg>
      <svg class="ic"><use href="#paste"/></svg>
      <svg class="ic"><use href="#pastes"/></svg>
      <i class="sep"></i>
      <svg class="ic"><use href="#books"/></svg>
      <i class="ar"></i>
      <i class="sep"></i>
      <svg class="ic"><use href="#hand"/></svg>
      <i class="sep"></i>
      <svg class="ic"><use href="#switch"/></svg>
      <span>切换窗口</span>
      <svg class="ic"><use href="#win"/></svg>
      <span>窗口</span>
      <i class="ar"></i>
      <i class="ar ar-menu"></i>
    </div>
    <div class="apptitle">NX 12.0.2.9 - 钣金</div>
    <div class="siemens">SIEMENS</div>
    <div class="winbtns">
      <i class="w-min"></i>
      <i class="w-rest"></i>
      <svg class="w-close" viewBox="0 0 28 28"><path d="M2 1 26 27M26 1 2 27" stroke="#444" stroke-width="3.5"/></svg>
    </div>
  </header>

  <nav class="tabbar">
    <div class="tab-file">文件(F)</div>
    <div class="tab tab-on">主页</div>
    <div class="tab">装配</div>
    <div class="tab">曲线</div>
    <div class="tab">分析</div>
    <div class="tab">视图</div>
    <div class="tab">渲染</div>
    <div class="tab">工具</div>
    <div class="tab tab-pmi">PMI</div>
    <div class="tab tab-wide">应用模块</div>
    <div class="tab">内部</div>
    <div class="tabright">
      <div class="search"><span>查找命令</span><svg class="search-ic"><use href="#find"/></svg></div>
      <svg class="rb-a"><use href="#ribmin"/></svg>
      <svg class="rb-b" viewBox="0 0 36 34"><path d="M4 30 18 4 32 30 18 20Z" fill="#fff" stroke="#222" stroke-width="3"/></svg>
      <svg class="rb-c"><use href="#help"/></svg>
    </div>
  </nav>

  <section class="ribbon">
    <div class="grp g1">
      <div class="g-body">
        <div class="big w155"><svg class="bi datum"><use href="#datum"/></svg><span>基准平面</span><i class="ar"></i></div>
      </div>
    </div>
    <div class="grp g2">
      <div class="g-body">
        <div class="big w140"><svg class="bi sk"><use href="#sketch"/></svg><span>草图</span></div>
        <div class="gallery">
          <svg class="gi"><use href="#sspline"/></svg><svg class="gi"><use href="#srect"/></svg><svg class="gi"><use href="#sline"/></svg>
          <svg class="gi"><use href="#sarc"/></svg><svg class="gi"><use href="#scircle"/></svg><svg class="gi"><use href="#spoint"/></svg>
        </div>
        <div class="scrl"><i class="up"></i><i class="ar"></i><i class="ar ar-menu"></i></div>
      </div>
      <div class="g-foot"><span>直接草图</span><i class="ar"></i></div>
    </div>
    <div class="grp g3">
      <div class="g-body">
        <div class="big w92"><div class="boxed"><svg class="bs"><use href="#convert"/></svg></div><span>转换</span><i class="ar"></i></div>
        <div class="big w190"><svg class="bi s2s"><use href="#s2s"/></svg><span>实体特征转<br>换为钣金</span></div>
        <div class="big w76"><svg class="bi tabb"><use href="#tabb"/></svg><span>突出块</span></div>
      </div>
      <div class="g-foot"><span>基本</span><i class="ar"></i></div>
    </div>
    <div class="grp g4">
      <div class="g-body">
        <div class="big w144"><svg class="bi flg"><use href="#flange"/></svg><span>弯边</span></div>
        <div class="big w90"><svg class="bi cnt"><use href="#contour"/></svg><span>轮廓弯边</span></div>
        <div class="big w92 more"><div class="boxed"><svg class="bs"><use href="#more1"/></svg></div><span>更多</span><i class="ar"></i></div>
      </div>
      <div class="g-foot"><span>折弯</span><i class="ar"></i></div>
    </div>
    <div class="grp g5">
      <div class="g-body">
        <div class="list w176">
          <div class="li"><svg class="lic"><use href="#ccorner"/></svg>封闭拐角</div>
          <div class="li"><svg class="lic"><use href="#tribend"/></svg>三折弯角</div>
          <div class="li"><svg class="lic"><use href="#chamf"/></svg>倒角</div>
        </div>
        <div class="scrl"><i class="up"></i><i class="ar"></i><i class="ar ar-menu"></i></div>
      </div>
      <div class="g-foot"><span>拐角</span><i class="ar"></i></div>
    </div>
    <div class="grp g6">
      <div class="g-body">
        <div class="list w176">
          <div class="li"><svg class="lic"><use href="#dimple"/></svg>凹坑</div>
          <div class="li"><svg class="lic"><use href="#louver"/></svg>百叶窗</div>
          <div class="li"><svg class="lic"><use href="#drawn"/></svg>冲压开孔</div>
        </div>
        <div class="scrl"><i class="up"></i><i class="ar"></i><i class="ar ar-menu"></i></div>
      </div>
      <div class="g-foot"><span>冲孔</span><i class="ar"></i></div>
    </div>
    <div class="grp g7">
      <div class="g-body">
        <div class="big w128"><svg class="bi ncut"><use href="#ncut"/></svg><span>法向开孔</span></div>
        <div class="big w128"><svg class="bi ptn"><use href="#pattern"/></svg><span>阵列特征</span></div>
        <div class="big w92 more2"><div class="boxed"><svg class="bs"><use href="#more2"/></svg></div><span>更多</span><i class="ar"></i></div>
      </div>
      <div class="g-foot"><span>特征</span><i class="ar"></i></div>
    </div>
    <div class="grp g8">
      <div class="g-body">
        <div class="list w286">
          <div class="li"><svg class="lic"><use href="#unbend"/></svg>伸直</div>
          <div class="li"><svg class="lic"><use href="#rebend"/></svg>重新折弯</div>
          <div class="li"><svg class="lic"><use href="#resize"/></svg>调整折弯半径大小</div>
        </div>
        <div class="scrl"><i class="up"></i><i class="ar"></i><i class="ar ar-menu"></i></div>
      </div>
      <div class="g-foot"><span>成形</span><i class="ar"></i></div>
    </div>
    <div class="grp g9">
      <div class="g-body">
        <div class="big w94"><div class="boxed"><svg class="bs flat"><use href="#flat"/></svg></div><span>展平图样</span><i class="ar"></i></div>
      </div>
    </div>
    <i class="ar ribbon-end"></i>
  </section>

  <section class="toolbar">
    <div class="tb-menu"><svg class="tb-mi"><use href="#menuic"/></svg><span>菜单(M)</span><i class="ar"></i></div>
    <i class="sep tb-first"></i>
    <div class="combo c1"><span>无选择过滤器</span><i class="ar-l"></i></div>
    <div class="combo c2"><span>仅在工作部件内</span><i class="ar-l"></i></div>
    <div class="tb-icons">
      <svg class="ic"><use href="#f1"/></svg><svg class="ic"><use href="#f2"/></svg><svg class="ic"><use href="#f3"/></svg><i class="ar"></i>
      <svg class="ic"><use href="#f4"/></svg><svg class="ic"><use href="#f5"/></svg><svg class="ic"><use href="#f6"/></svg><svg class="ic"><use href="#f7"/></svg><i class="ar"></i>
      <svg class="ic"><use href="#f8"/></svg><svg class="ic"><use href="#f9"/></svg><svg class="ic"><use href="#f10"/></svg><svg class="ic"><use href="#f11"/></svg>
      <svg class="ic"><use href="#f12"/></svg><svg class="ic"><use href="#f13"/></svg><svg class="ic"><use href="#f14"/></svg><svg class="ic"><use href="#f15"/></svg>
      <svg class="ic"><use href="#f16"/></svg><svg class="ic"><use href="#f17"/></svg><svg class="ic"><use href="#f18"/></svg><svg class="ic"><use href="#f19"/></svg>
      <svg class="ic"><use href="#f20"/></svg><svg class="ic"><use href="#f21"/></svg><svg class="ic"><use href="#f22"/></svg><svg class="ic"><use href="#f23"/></svg>
      <i class="sep"></i>
      <svg class="ic"><use href="#f24"/></svg><svg class="ic"><use href="#f25"/></svg><svg class="ic"><use href="#f26"/></svg><svg class="ic"><use href="#f27"/></svg>
      <svg class="ic"><use href="#f28"/></svg><svg class="ic"><use href="#f29"/></svg><i class="ar"></i>
      <svg class="ic"><use href="#f30"/></svg><i class="ar"></i>
      <svg class="ic"><use href="#f31"/></svg><i class="ar"></i>
      <svg class="ic"><use href="#f32"/></svg><i class="ar"></i>
      <i class="sep"></i>
    </div>
    <i class="ar tb-end"></i>
  </section>

  <main class="main">
    <aside class="rail">
      <svg class="ri gearic"><use href="#gear"/></svg>
      <svg class="ri"><use href="#nav1"/></svg>
      <svg class="ri"><use href="#nav2"/></svg>
      <div class="rail-on"><svg class="ri"><use href="#nav3"/></svg></div>
      <svg class="ri"><use href="#nav4"/></svg>
      <svg class="ri"><use href="#nav5"/></svg>
      <svg class="ri"><use href="#nav6"/></svg>
      <svg class="ri"><use href="#nav7"/></svg>
      <svg class="ri"><use href="#nav8"/></svg>
      <svg class="ri"><use href="#nav9"/></svg>
    </aside>
    <section class="nav">
      <div class="nav-head"><span>部件导航器</span><i class="maxbtn"></i></div>
      <div class="tree">
        <div class="tree-head"><span>名称</span><i class="sort"></i></div>
        <div class="tree-body">
          <svg class="tree-lines" viewBox="0 0 120 290"><path d="M24 38V125M36 27H48M36 77H48M36 127H48M71 151V277M72 177H94M72 227H94M72 277H94" fill="none" stroke="#999" stroke-width="2" stroke-dasharray="2 3"/></svg>
          <div class="row"><svg class="exp"><use href="#plus"/></svg><svg class="tic v1"><use href="#tview"/></svg><span>模型视图</span></div>
          <div class="row"><svg class="exp"><use href="#plus"/></svg><svg class="tck"><use href="#tcheck"/></svg><svg class="tic cam"><use href="#tcam"/></svg><span>摄像机</span></div>
          <div class="row"><svg class="exp"><use href="#minus"/></svg><svg class="tic v1"><use href="#tfolder"/></svg><span>模型历史记录</span></div>
          <div class="row leaf dim"><i class="cb"><svg><use href="#tcheck"/></svg></i><svg class="tic"><use href="#tcsys"/></svg><span>基准坐标系 (0)</span></div>
          <div class="row leaf"><i class="cb"><svg><use href="#tcheck"/></svg></i><svg class="tic"><use href="#ttab"/></svg><span>SB 突出块 (1)</span></div>
          <div class="row leaf cur"><i class="cb"><svg><use href="#tcheck"/></svg></i><svg class="tic"><use href="#tfl"/></svg><span>SB 弯边 (11)</span></div>
          <div class="row"></div><div class="row"></div><div class="row"></div><div class="row"></div><div class="row"></div><div class="row"></div>
          <div class="row"></div><div class="row"></div><div class="row"></div><div class="row"></div><div class="row"></div><div class="row"></div>
          <div class="row"></div><div class="row"></div><div class="row"></div><div class="row"></div><div class="row"></div><div class="row"></div>
        </div>
        <div class="hscroll"><svg class="hs-a" viewBox="0 0 18 18"><path d="M15 2 3 9l12 7" fill="none" stroke="#555" stroke-width="4"/></svg><i class="hs-thumb"></i><svg class="hs-b" viewBox="0 0 18 18"><path d="M3 2l12 7-12 7" fill="none" stroke="#555" stroke-width="4"/></svg></div>
        <i class="tree-foot"></i>
      </div>
      <div class="acc"><span>相关性</span><svg viewBox="0 0 28 18"><path d="M2 2 14 15 26 2" fill="none" stroke="#0d6f8e" stroke-width="4"/></svg></div>
      <div class="acc"><span>细节</span><svg viewBox="0 0 28 18"><path d="M2 2 14 15 26 2" fill="none" stroke="#0d6f8e" stroke-width="4"/></svg></div>
      <div class="acc"><span>预览</span><svg viewBox="0 0 28 18"><path d="M2 2 14 15 26 2" fill="none" stroke="#0d6f8e" stroke-width="4"/></svg></div>
    </section>

    <section class="work">
      <div class="docstrip">
        <div class="doctab">
          <svg class="doc-ic" viewBox="0 0 34 38"><path d="M2 12 18 2 32 10 16 20zM2 20 16 28 32 18V28L16 38 2 28z" fill="#5a67d8" stroke="#dfe3ff" stroke-width="2"/></svg>
          <span>model1_1....</span>
          <svg class="doc-a" viewBox="0 0 24 26"><path d="M2 2H16V8H22V24H2z" fill="none" stroke="#fff" stroke-width="3"/><path d="M10 14 20 4" stroke="#fff" stroke-width="3"/></svg>
          <svg class="doc-x" viewBox="0 0 22 22"><path d="M2 2 20 20M20 2 2 20" stroke="#a9c4cf" stroke-width="5"/></svg>
        </div>
      </div>
      <div class="workrow">
        <div class="dialog">
          <div class="dlg-head">
            <svg class="dh-gear"><use href="#gear"/></svg>
            <span>可重用对象</span>
            <svg class="dh-re" viewBox="0 0 32 32"><path d="M14 4A12 12 0 1 0 28 16" fill="none" stroke="#fff" stroke-width="4"/><path d="M12 0V10L22 4z" fill="#fff"/></svg>
            <svg class="dh-x" viewBox="0 0 30 30"><path d="M3 3 27 27M27 3 3 27" stroke="#fff" stroke-width="5"/></svg>
          </div>
          <div class="dlg-body">
            <div class="dlg-sections">
              <div class="stub"></div>
              <div class="sec s1">
                <div class="sec-h"><span>对象</span><svg viewBox="0 0 28 18"><path d="M2 16 14 3 26 16" fill="none" stroke="#0d6f8e" stroke-width="4"/></svg></div>
                <div class="sel-row"><div class="sel-main"><svg class="tck"><use href="#tcheck"/></svg><span>选择对象 (7)</span></div><div class="sel-btn"><svg><use href="#cross"/></svg></div></div>
              </div>
              <div class="sec s2">
                <div class="sec-h"><span>锚点</span><svg viewBox="0 0 28 18"><path d="M2 16 14 3 26 16" fill="none" stroke="#0d6f8e" stroke-width="4"/></svg></div>
                <div class="sel-row plain"><div class="sel-main"><svg class="tck"><use href="#tcheck"/></svg><span>指定方位</span></div><div class="sel-btn"><svg><use href="#csys"/></svg></div></div>
              </div>
              <div class="sec s3">
                <div class="sec-h"><span>名称</span><svg viewBox="0 0 28 18"><path d="M2 16 14 3 26 16" fill="none" stroke="#0d6f8e" stroke-width="4"/></svg></div>
                <div class="lbl l1">描述性名称</div>
                <div class="inp i1">NX10.0弯边命令调用</div>
                <div class="lbl l2">部件文件</div>
                <div class="inp i2">model1_1_export.prt</div>
              </div>
              <div class="sec s4">
                <div class="sec-h"><span>预览图像</span><svg viewBox="0 0 28 18"><path d="M2 16 14 3 26 16" fill="none" stroke="#0d6f8e" stroke-width="4"/></svg></div>
                <div class="frow fr1"><span>输入</span><div class="dsel"><span>图形区域</span><i class="ar-l"></i></div></div>
                <div class="frow fr2"><span>定义图像</span><div class="sel-btn"><svg><use href="#camera"/></svg></div></div>
                <div class="prev">
                  <div class="prev-h"><span>图像预览</span><svg viewBox="0 0 28 18"><path d="M2 16 14 3 26 16" fill="none" stroke="#0d6f8e" stroke-width="4"/></svg></div>
                  <div class="prev-img">
                    <div class="prev-view"><svg viewBox="702 1562 616 271"><g class="mini" transform="translate(885 1567) scale(.21 .2116) translate(-1503 -498)"><use href="#model"/></g></svg></div>
                    <div class="vs"><svg viewBox="0 0 22 16"><path d="M2 14 11 3 20 14 11 9z" fill="#111" stroke="#111"/></svg><i></i><svg viewBox="0 0 22 16"><path d="M2 2 11 13 20 2" fill="none" stroke="#444" stroke-width="4"/></svg></div>
                    <div class="hs"><svg viewBox="0 0 18 22"><path d="M15 2 3 11l12 9" fill="none" stroke="#555" stroke-width="4"/></svg><i></i><svg viewBox="0 0 18 22"><path d="M3 2l12 9-12 9" fill="none" stroke="#555" stroke-width="4"/></svg></div>
                  </div>
                </div>
              </div>
            </div>
            <div class="dlg-scroll">
              <div class="ds-up"><svg viewBox="0 0 22 16"><path d="M2 14 11 3 20 14 11 9z" fill="#555" stroke="#555"/></svg></div>
              <i class="ds-thumb"></i>
              <div class="ds-dn"><svg viewBox="0 0 22 16"><path d="M2 2 11 13 20 2" fill="none" stroke="#555" stroke-width="4"/></svg></div>
            </div>
          </div>
          <div class="dlg-foot"><div class="btn ok">确定</div><div class="btn cancel">取消</div></div>
        </div>
        <div class="gfx">
          <svg class="gfx-svg" viewBox="1466 478 2374 1527"><g class="big3d"><use href="#model"/></g></svg>
        </div>
      </div>
    </section>
  </main>

  <footer class="status">
    <span>选择面以定义可重用对象</span>
    <div class="st-icons">
      <svg class="st-a" viewBox="0 0 40 40"><rect x="1" y="1" width="38" height="38" fill="#ddd" stroke="#bbb" stroke-width="2"/><path d="M6 10 14 18V34M26 8l-2 10M8 24 32 14" stroke="#999" stroke-width="3" fill="none"/><g fill="#fff"><circle cx="22" cy="20" r="3"/><circle cx="30" cy="22" r="3"/><circle cx="24" cy="28" r="3"/></g></svg>
      <svg class="st-b"><use href="#ribmin"/></svg>
    </div>
  </footer>

  <svg class="marks" viewBox="0 0 3840 2057" aria-hidden="true">
    <g class="ink">
      <path d="M110 743C112 775 114 800 118 824"/>
      <path class="dot" d="M139 815h1"/>
      <path d="M8 839C40 834 65 836 95 834"/>
      <path d="M193 850C280 846 350 858 452 857"/>
      <path d="M236 884C246 868 280 866 294 885 310 910 290 938 234 956 262 955 290 960 311 968"/>
      <path class="dot" d="M343 961h1"/>
      <path d="M1010 986C1030 979 1050 976 1063 979 1062 990 1040 1000 1020 1009 1050 1010 1066 1025 1059 1042 1050 1060 1036 1065 1026 1064"/>
      <path class="dot" d="M1076 1050h1"/>
      <path d="M659 1134C680 1126 720 1124 780 1128 870 1134 950 1138 1036 1136"/>
    </g>
    <g class="wm">
      <path class="wm-hex" d="M3594 1962 3629 1982V2022L3594 2043 3558 2022V1982Z"/>
      <path class="wm-line" d="M3558 1995C3570 1975 3600 1965 3613 1975 3632 1995 3635 2025 3610 2040M3558 2012C3580 2030 3610 2035 3628 2018"/>
      <path class="wm-cube-a" d="M3594 1985 3610 1994 3594 2003 3578 1994Z"/>
      <path class="wm-cube-b" d="M3578 1994 3594 2003V2022L3578 2012Z"/>
      <path class="wm-cube-c" d="M3610 1994V2012L3594 2022V2003Z"/>
      <text class="wm-text" x="3636" y="2007">3D世界网</text>
    </g>
  </svg>
</div>
</body>
</html>
```

FILE: styles.css
```css
*{box-sizing:border-box;margin:0;padding:0}
html,body{width:3840px;height:2057px;overflow:hidden;background:#fff}
body{font-family:"Open Sans","Noto Sans CJK SC","Liberation Sans",sans-serif;color:#222;font-size:27px}
i{font-style:normal;display:block}
svg{display:block}
.sprite{position:absolute;width:0;height:0}
.app{position:relative;width:3840px;height:2057px;display:flex;flex-direction:column}

/* small shared glyphs */
.ar{width:40px;height:16px;position:relative;flex:none}
.ar::before{content:"";position:absolute;left:14px;top:4px;border:6px solid transparent;border-top:9px solid #222;border-bottom:0}
.ar-menu::after{content:"";position:absolute;left:14px;top:0;width:12px;height:2px;background:#222}
.ar-l{width:0;height:0;border:9px solid transparent;border-top:11px solid #222;border-bottom:0;flex:none}
.up{width:40px;height:16px;position:relative}
.up::before{content:"";position:absolute;left:14px;top:2px;border:6px solid transparent;border-bottom:10px solid #bbb;border-top:0}
.sep{width:2px;height:60px;background:#ddd;margin-left:19px}

/* title bar */
.titlebar{height:65px;flex:none;display:flex;align-items:center;position:relative;background:#fff}
.loadbar{position:absolute;left:0;top:0;right:0;height:3px;background:linear-gradient(90deg,#e8e8e8 0,#e8e8e8 2222px,#f2f2f2 2222px)}
.loadbar-on{position:absolute;left:1619px;top:0;height:3px;width:120px;background:#1673c8}
.nxlogo{margin-left:10px;width:73px;font:700 52px/1 "Liberation Sans",sans-serif;color:#70899a;letter-spacing:3px}
.qat{display:grid;grid-template-columns:44px 73px 46px 40px 38px 36px 58px 58px 57px 35px 34px 49px 20px 36px 36px 36px 51px 125px 53px 50px 28px 40px;align-items:center;justify-items:start}
.qat .ic{width:40px;height:48px}
.qat span{font-size:27px;white-space:nowrap}
.apptitle{margin-left:1038px;font-size:32px;white-space:nowrap}
.siemens{margin-left:auto;font:700 30px/1 "Liberation Sans",sans-serif;color:#0a9a9a;letter-spacing:2.2px;margin-right:70px}
.winbtns{display:flex;align-items:flex-end;height:30px;margin-right:20px;gap:34px}
.w-min{width:20px;height:7px;background:#444}
.w-rest{position:relative;border:3px solid #444;border-width:9px 3px 3px 3px;width:24px;height:20px}
.w-rest::before{content:"";position:absolute;left:4px;top:-15px;width:24px;height:20px;border:3px solid #444;border-top-width:5px;border-left:0;border-bottom:0}
.w-close{width:28px;height:28px;align-self:flex-start}

/* tabs */
.tabbar{height:65px;flex:none;background:#dcdcdc;display:flex;align-items:stretch}
.tab-file{width:203px;background:#5ba0bb;color:#fff;display:flex;align-items:center;justify-content:center;font-size:30px;margin-right:4px}
.tab{width:130px;display:flex;align-items:center;justify-content:center;font-size:32px;color:#222}
.tab-on{background:#fff;color:#0f7590;border-top:3px solid #aaa;margin-top:3px;padding-bottom:6px}
.tab-pmi{width:122px}
.tab-wide{width:196px}
.tabright{margin-left:auto;display:flex;align-items:center;padding-right:25px}
.search{width:304px;height:44px;background:#fff;border:3px solid #aaa;display:flex;align-items:center;justify-content:space-between;color:#aaa;font-size:26px;padding:0 2px}
.search-ic{width:36px;height:42px}
.rb-a{width:40px;height:44px;margin-left:28px}
.rb-b{width:36px;height:32px;margin-left:26px}
.rb-c{width:34px;height:36px;margin-left:31px}
.qm{font:700 30px "Liberation Sans",sans-serif;fill:#fff}

/* ribbon */
.ribbon{height:218px;flex:none;display:flex;padding-top:12px;position:relative;border-bottom:3px solid #ddd;background:#fff}
.grp{display:flex;flex-direction:column;height:195px;border-right:2px solid #e2e2e2;position:relative;flex:none}
.g1{width:155px}.g2{width:441px}.g3{width:407px;padding-left:17px}.g4{width:378px}.g5{width:235px;padding-left:12px}
.g6{width:234px;padding-left:12px}.g7{width:408px;padding-left:24px}.g8{width:346px;padding-left:12px}.g9{width:137px;padding-left:22px}
.g-body{display:flex;height:163px;flex:none}
.g-foot{display:flex;align-items:center;height:32px;color:#14839b;font-size:27px;line-height:32px;position:absolute;left:0;right:0;bottom:-3px}
.g-foot span{flex:1;text-align:center;white-space:nowrap;padding-left:10px}
.g-foot .ar{margin-right:4px;width:40px}
.big{display:flex;flex-direction:column;align-items:center;flex:none;line-height:40px;font-size:27px;white-space:nowrap}
.big span{text-align:center;display:block;height:40px}
.big .ar{margin-top:3px}
.bi,.boxed{height:90px;flex:none}
.w155{width:155px}.w140{width:140px}.w92{width:92px}.w190{width:190px}.w76{width:76px}.w144{width:144px}.w90{width:90px}.w128{width:128px}.w94{width:94px}
.more{margin-left:40px}.more2{margin-left:24px}
.datum{width:64px;height:76px;margin:3px 0 11px}
.sk{width:76px;height:76px;margin:3px 0 11px}
.s2s{width:76px;height:76px;margin:5px 0 9px}
.tabb{width:56px;height:76px;margin:5px 0 9px}
.flg{width:56px;height:76px;margin:4px 0 10px}
.cnt{width:70px;height:76px;margin:4px 0 10px}
.ncut{width:68px;height:76px;margin:3px 0 11px}
.ptn{width:76px;height:68px;margin:11px 0 11px}
.boxed{width:100%;height:86px;margin:-2px 0 6px;border:2px solid #e6e6e6;border-radius:10px;display:flex;align-items:center;justify-content:center}
.bs{width:44px;height:44px}
.flat{width:40px;height:60px}
.gallery{width:245px;height:162px;margin-left:1px;margin-top:1px;border:2px solid #ddd;display:grid;grid-template-columns:repeat(3,1fr);grid-template-rows:1fr 1fr;place-items:center}
.gi{width:56px;height:56px}
.scrl{width:40px;margin-left:3px;display:flex;flex-direction:column;padding-top:18px;gap:39px}
.list{height:162px;margin-top:1px;border:2px solid #ddd;display:flex;flex-direction:column;padding:0 0 0 5px;flex:none}
.w176{width:176px}.w286{width:286px}
.li{height:55px;flex:none;display:flex;align-items:center;font-size:27px;white-space:nowrap;gap:10px;position:relative;top:-4px}
.lic{width:38px;height:42px;flex:none}
.ribbon-end{position:absolute;right:3px;top:190px}

/* toolbar */
.toolbar{height:77px;flex:none;display:flex;align-items:center;border-bottom:3px solid #999;padding-left:25px;padding-top:3px;background:#fff}
.tb-menu{width:184px;display:flex;align-items:center;font-size:27px;white-space:nowrap}
.tb-mi{width:40px;height:50px;margin-right:8px;flex:none}
.tb-menu .ar{margin-left:-8px}
.tb-first{margin-left:0}
.combo{height:44px;border:3px solid #aaa;display:flex;align-items:center;justify-content:space-between;padding:0 10px 0 6px;font-size:27px;white-space:nowrap;flex:none}
.c1{width:331px;margin-left:29px}
.c2{width:347px;margin-left:22px}
.tb-icons{margin-left:20px;display:grid;grid-template-columns:70px 48px 42px 55px 57px 65px 58px 46px 49px 60px 67px 60px 63px 60px 62px 63px 63px 66px 63px 61px 60px 64px 63px 60px 48px 52px 62px 59px 64px 62px 66px 46px 44px 46px 48px 46px 44px 46px 33px 40px;justify-items:start;align-items:center}
.tb-icons .ic{width:40px;height:44px}
.tb-end{margin-left:auto;margin-right:2px}

/* main */
.main{flex:1;display:flex;min-height:0}
.rail{width:79px;flex:none;background:#dcdcdc;border-right:2px solid #aaa;display:grid;grid-template-rows:112px 108px 103px 106px 132px 136px 134px 106px 105px 1fr;justify-items:center;align-items:start;padding-top:13px;position:relative;isolation:isolate}
.ri{width:60px;height:66px;margin-left:4px}
.gearic{width:34px;height:36px;margin:0;color:#333}
.rail-on{width:100%;display:flex;justify-content:center;position:relative}
.rail-on::before{content:"";position:absolute;left:6px;top:-25px;width:73px;height:113px;background:#fff;border:2px solid #aaa;border-right:0;z-index:-1}
.nav{width:557px;flex:none;padding:0 24px 0 16px;display:flex;flex-direction:column;border-right:2px solid #aaa}
.nav-head{height:70px;flex:none;display:flex;align-items:center;justify-content:space-between;font-size:30px;padding:0 17px 3px 10px}
.maxbtn{width:30px;height:28px;border:3px solid #111;border-top-width:7px}
.tree{height:1313px;flex:none;border:3px solid #ddd;border-bottom:0;padding:2px 2px 0;display:flex;flex-direction:column}
.tree-head{height:46px;flex:none;background:#eee;border-bottom:2px solid #ccc;display:flex;align-items:center;font-size:30px;padding-left:15px;gap:42px}
.sort{width:0;height:0;border:13px solid transparent;border-bottom:13px solid #111;border-top:0}
.tree-body{position:relative;height:1200px;flex:none}
.tree-body::after{content:"";position:absolute;left:499px;top:0;bottom:0;width:2px;background:#eee}
.tree-lines{position:absolute;left:0;top:0;width:120px;height:290px}
.row{height:50px;display:flex;align-items:center;border-bottom:2px solid #eee;font-size:30px;padding-left:13px;white-space:nowrap;position:relative}
.row:nth-child(odd){background:#fafafa}
.exp{width:22px;height:22px;flex:none}
.tic{width:38px;height:38px;flex:none}
.v1{margin:0 8px 0 13px}
.tck{width:30px;height:30px;flex:none;margin-left:18px}
.cam{margin:0 10px 0 6px}
.leaf{padding-left:100px}
.cb{width:30px;height:30px;border:3px solid #111;background:#fff;flex:none;margin-right:7px}
.cb svg{width:24px;height:24px}
.leaf span{margin-left:8px}
.dim{color:#aaa}
.cur span{font-weight:700}
.hscroll{height:42px;margin-top:4px;background:#f0f0f0;display:flex;align-items:center;flex:none;position:relative}
.hs-a{width:18px;height:18px;margin-left:12px}
.hs-thumb{width:215px;height:42px;background:#c6c6c6;margin-left:13px}
.hs-b{width:18px;height:18px;margin-left:auto;margin-right:12px}
.tree-foot{height:11px;margin:5px -5px 0;background:#ddd;border:2px solid #aaa;flex:none}
.acc{height:60px;flex:none;display:flex;align-items:center;justify-content:space-between;border-bottom:3px solid #ccc;color:#3b88a8;font-size:35px;padding:5px 13px 0 18px}
.acc svg{width:28px;height:18px;margin-bottom:4px}

/* work area */
.work{flex:1;display:flex;flex-direction:column;min-width:0}
.docstrip{height:53px;flex:none;border-bottom:3px solid #5b9fb9;margin-left:1px;display:flex}
.doctab{width:338px;background:#5b9fb9;color:#e8f3f7;display:flex;align-items:center;font-size:30px;padding-left:18px;white-space:nowrap}
.doc-ic{width:34px;height:38px;margin-right:14px;flex:none}
.doc-a{width:24px;height:26px;margin-left:26px;flex:none}
.doc-x{width:22px;height:22px;margin-left:14px;flex:none}
.workrow{flex:1;display:flex;min-height:0}
.dialog{width:829px;flex:none;background:#f0f0f0;display:flex;flex-direction:column;border-right:2px solid #c8c8c8}
.dlg-head{height:59px;flex:none;background:#5b9fb9;color:#fff;display:flex;align-items:center;font-size:35px;padding:0 24px 0 18px}
.dh-gear{width:34px;height:34px;color:#fff;margin-right:22px}
.dh-re{width:30px;height:30px;margin-left:auto}
.dh-x{width:28px;height:28px;margin-left:22px}
.dlg-body{display:flex;padding-top:9px;height:1363px;flex:none}
.dlg-sections{width:756px;margin-left:16px;flex:none;display:flex;flex-direction:column;gap:6px;overflow:hidden}
.stub{height:22px;flex:none;background:#fff;border-bottom:3px solid #ccc}
.sec{background:#fff;flex:none;border-bottom:3px solid #ccc;padding:0 23px 0 22px}
.s1,.s2{height:179px}
.s3{height:314px}
.s4{height:638px;border-bottom:0}
.sec-h{height:66px;display:flex;align-items:center;justify-content:space-between;color:#3b88a8;font-size:34px;margin-left:-4px;margin-right:-9px}
.sec-h svg{width:28px;height:18px;margin-bottom:6px}
.sel-row{display:flex;height:79px;margin-top:9px;gap:6px}
.sel-main{width:625px;background:#ffdc7a;display:flex;align-items:center;font-size:30px}
.plain .sel-main{background:none}
.sel-main .tck{margin:0 15px 0 6px}
.sel-btn{width:80px;height:79px;background:#ffdc7a;display:flex;align-items:center;justify-content:center;flex:none}
.sel-btn svg{width:48px;height:48px}
.plain .sel-btn,.fr2 .sel-btn{background:#fff;border:2px solid #aaa}
.plain .sel-btn svg{width:56px;height:60px}
.fr2 .sel-btn svg{width:52px;height:60px}
.lbl{font-size:30px;line-height:40px;height:40px}
.l1{margin-top:15px}
.l2{margin-top:12px}
.inp{border:3px solid #aaa;height:51px;font-size:30px;line-height:44px;margin-left:6px;padding-left:10px;white-space:nowrap}
.i1{margin-top:8px}
.i2{margin-top:7px;height:50px}
.frow{display:flex;justify-content:space-between;align-items:center;font-size:30px}
.fr1{height:55px;margin-top:11px}
.fr2{height:79px;margin-top:7px}
.dsel{width:322px;height:55px;border:3px solid #aaa;display:flex;align-items:center;justify-content:space-between;padding:0 12px;font-size:30px}
.prev{margin-top:7px;height:413px;background:#f0f0f0;border:3px solid #ddd;padding:0 20px}
.prev-h{height:65px;display:flex;align-items:center;justify-content:space-between;color:#3b88a8;font-size:30px;padding-bottom:20px}
.prev-h svg{width:26px;height:18px}
.prev-img{width:665px;height:320px;border:3px solid #777;display:grid;grid-template-columns:1fr 42px;grid-template-rows:1fr 42px;background:#fff;margin-top:3px}
.prev-view{background:linear-gradient(180deg,#cbcccf,#dcdde0);min-width:0;min-height:0;overflow:hidden}
.prev-view svg{width:616px;height:271px}
.vs{display:flex;flex-direction:column;align-items:center;background:#f0f0f0;padding-top:14px}
.vs svg{width:22px;height:16px;flex:none}
.vs i{width:100%;height:163px;background:#bbb;margin:11px 0 24px}
.hs{grid-column:1;background:#f0f0f0;display:flex;align-items:center;padding-left:12px}
.hs svg{width:18px;height:22px;flex:none}
.hs i{width:493px;height:42px;background:#c8c8c8;margin-left:11px;margin-right:44px}
.dlg-scroll{width:41px;flex:none;display:flex;flex-direction:column;height:1352px}
.ds-up{height:122px;padding-top:15px}
.ds-up svg,.ds-dn svg{width:22px;height:16px;margin-left:10px}
.ds-thumb{height:1163px;background:#c4c4c4}
.ds-dn{padding-top:41px}
.dlg-foot{display:flex;justify-content:flex-end;gap:14px;padding:21px 38px 0 0}
.btn{width:134px;height:57px;display:flex;align-items:center;justify-content:center;font-size:30px}
.ok{background:#6fb2c9;color:#e4f3f8}
.cancel{background:#e1e1e1;border:2px solid #aaa;color:#222}
.gfx{flex:1;background:linear-gradient(180deg,#b2b3b5 0,#d6d7d9 50%,#e5e6e8 82%,#e7e8ea 100%);min-width:0}
.gfx-svg{width:100%;height:100%}

/* model faces: colours arrive through custom properties, which reach into <use> */
.m-top{fill:var(--top)}
.m-web{fill:var(--web)}
.m-bend{fill:var(--bend)}
.m-plate{fill:var(--plate)}
.m-front{fill:var(--front);stroke:var(--front-edge)}
.m-side{fill:var(--side)}
.m-top,.m-web,.m-bend,.m-plate,.m-side{stroke:var(--edge)}
.m-top,.m-web,.m-bend,.m-plate,.m-front,.m-side{stroke-width:var(--sw);stroke-linejoin:round}
.big3d{--top:#ffd264;--web:#9e642c;--bend:url(#bendA);--plate:#c8e0e8;--front:#5f6b6c;--front-edge:#515c5d;--side:#b97836;--edge:#f5a04a;--sw:5px}
.mini{--top:#c8e0e8;--web:#5f6b6c;--bend:url(#bendB);--plate:#c8e0e8;--front:#5f6b6c;--front-edge:#3d4647;--side:#7b8a8c;--edge:#3d4647;--sw:8px}

/* status */
.status{height:52px;flex:none;border-top:2px solid #aaa;display:flex;align-items:center;font-size:27.5px;font-weight:500;padding-left:7px;background:#fff}
.st-icons{margin-left:auto;display:flex;gap:10px;margin-right:137px;align-items:center}
.st-a{width:40px;height:40px}
.st-b{width:40px;height:42px}

/* hand-drawn notes and watermark */
.marks{position:absolute;left:0;top:0;width:3840px;height:2057px;pointer-events:none}
.ink path{fill:none;stroke:#e01c24;stroke-width:9;stroke-linecap:round;stroke-linejoin:round}
.ink .dot{stroke-width:13}
.wm-hex{fill:#6fc0f0;opacity:.72}
.wm-line{fill:none;stroke:#fff;stroke-width:1.5;opacity:.8}
.wm-cube-a{fill:#bfe3f8}.wm-cube-b{fill:#7cc6ee}.wm-cube-c{fill:#55b0e2}
.wm-text{font:700 42px "Noto Sans CJK SC","Liberation Sans",sans-serif;fill:#fff;opacity:.45}
.axis{font:700 12px "Liberation Sans",sans-serif;fill:#222}
.info{font:700 28px "Liberation Serif",serif;fill:#fff}
```
